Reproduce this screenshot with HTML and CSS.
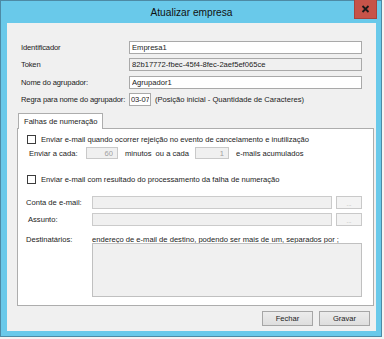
FILE: index.html
```html
<!DOCTYPE html>
<html lang="pt">
<head>
    <meta charset="UTF-8">
    <title>Atualizar empresa</title>
    <link rel="stylesheet" href="styles.css">
</head>
<body>
    <div class="window">
        <!-- Title bar -->
        <div class="titlebar">
            <span></span>
            <span class="title">Atualizar empresa</span>
            <button class="close" type="button" aria-label="Fechar">
                <svg width="9" height="8" viewBox="0 0 9 8">
                    <path d="M1.5 1 L7.5 7 M7.5 1 L1.5 7" stroke="#1a1a1a" stroke-width="1.8" fill="none"/>
                </svg>
            </button>
        </div>

        <div class="content">
            <div class="fields">
                <div class="field">
                    <label class="field-label">Identificador</label>
                    <input class="text wide" value="Empresa1">
                </div>
                <div class="field">
                    <label class="field-label">Token</label>
                    <input class="text wide readonly" value="82b17772-fbec-45f4-8fec-2aef5ef065ce" readonly>
                </div>
                <div class="field field-spaced">
                    <label class="field-label">Nome do agrupador:</label>
                    <input class="text wide" value="Agrupador1">
                </div>
                <div class="field">
                    <label class="field-label">Regra para nome do agrupador:</label>
                    <input class="text short" value="03-07">
                    <span class="hint">(Posição inicial - Quantidade de Caracteres)</span>
                </div>
            </div>

            <!-- Tab control -->
            <div class="tabs">
                <div class="tab-strip">
                    <div class="tab active">Falhas de numeração</div>
                </div>
                <div class="tab-panel">
                    <div class="check-row first">
                        <input type="checkbox" class="check">
                        <span>Enviar e-mail quando ocorrer rejeição no evento de cancelamento e inutilização</span>
                    </div>
                    <div class="every-row">
                        <span class="every-label">Enviar a cada:</span>
                        <input class="text num minutes" value="60" disabled>
                        <span class="unit">minutos</span>
                        <span class="unit">ou a cada</span>
                        <input class="text num count" value="1" disabled>
                        <span class="unit-last">e-mails acumulados</span>
                    </div>
                    <div class="check-row second">
                        <input type="checkbox" class="check">
                        <span>Enviar e-mail com resultado do processamento da falha de numeração</span>
                    </div>
                    <div class="mail-row account">
                        <span class="mail-label">Conta de e-mail:</span>
                        <input class="text mail-input" disabled>
                        <button class="dots" type="button" disabled>...</button>
                    </div>
                    <div class="mail-row subject">
                        <span class="mail-label indent">Assunto:</span>
                        <input class="text mail-input" disabled>
                        <button class="dots" type="button" disabled>...</button>
                    </div>
                    <div class="mail-row recipients">
                        <span class="mail-label">Destinatários:</span>
                        <span>endereço de e-mail de destino, podendo ser mais de um, separados por ;</span>
                    </div>
                    <textarea class="recipients-box" disabled></textarea>
                </div>
            </div>

            <div class="actions">
                <button class="button" type="button">Fechar</button>
                <button class="button" type="button">Gravar</button>
            </div>
        </div>
    </div>
</body>
</html>
```

FILE: styles.css
```css
/* Basic page */
body {
    margin: 0;
    background-color: #f4f4f4;
    font-family: "Liberation Sans", Arial, sans-serif;
    font-size: 7.6px;
    color: #1b1b1b;
    white-space: nowrap;
}

/* Window frame */
.window {
    width: 382px;
    height: 337px;
    box-sizing: border-box;
    border: 1px solid #4d8aa5;
    background-color: #69c9ea;
    padding: 0 5px 5px 6px;
    display: flex;
    flex-direction: column;
}

.titlebar {
    height: 22px;
    display: grid;
    grid-template-columns: 1fr auto 1fr;
    align-items: center;
}

.title {
    font-size: 10.2px;
    color: #111;
    padding-top: 1px;
}

.close {
    justify-self: end;
    align-self: start;
    width: 23px;
    height: 19px;
    margin: -1px -1px 0 0;
    padding: 0;
    border: 1px solid #a8443d;
    border-top: none;
    background-color: #c75349;
    display: flex;
    align-items: center;
    justify-content: center;
}

.content {
    flex: 1;
    background-color: #f0f0f0;
    display: flex;
    flex-direction: column;
}

/* Top fields */
.fields {
    padding: 18px 0 0 14px;
    display: flex;
    flex-direction: column;
    gap: 4px;
}

.field {
    height: 13px;
    display: flex;
    align-items: center;
}

.field-spaced {
    margin-top: 1px;
}

.field-label {
    width: 108px;
    flex: none;
    letter-spacing: -0.15px;
}

.text {
    box-sizing: border-box;
    height: 13px;
    margin: 0;
    padding: 0 2px;
    border: 1px solid #a9a9a9;
    background-color: #ffffff;
    font-family: inherit;
    font-size: 7.6px;
    color: #1b1b1b;
    outline: none;
}

.wide {
    width: 233px;
}

.readonly {
    background-color: #f0f0f0;
}

.short {
    width: 22px;
    padding: 0 1px;
    letter-spacing: -0.2px;
}

.hint {
    margin-left: 4px;
}

/* Tabs */
.tabs {
    margin: 7px 2px 0 10px;
}

.tab-strip {
    display: flex;
    padding-left: 1px;
}

.tab {
    height: 16px;
    box-sizing: border-box;
    padding: 0 5px;
    margin-bottom: -1px;
    border: 1px solid #adadad;
    border-bottom: none;
    background-color: #ffffff;
    display: flex;
    align-items: center;
    position: relative;
    z-index: 1;
}

.tab-panel {
    height: 178px;
    box-sizing: border-box;
    border: 1px solid #adadad;
    background-color: #ffffff;
    display: flex;
    flex-direction: column;
}

.check-row {
    height: 11px;
    display: flex;
    align-items: center;
    padding-left: 9px;
}

.check-row.first {
    margin-top: 5px;
}

.check-row.second {
    margin-top: 15px;
}

.check {
    appearance: none;
    width: 9px;
    height: 9px;
    margin: 0 5px 0 0;
    border: 1px solid #3c3c3c;
    background-color: #ffffff;
}

.every-row {
    height: 12px;
    margin-top: 2px;
    padding-left: 11px;
    display: flex;
    align-items: center;
}

.every-label {
    width: 57px;
}

.num {
    height: 12px;
    text-align: right;
    padding-right: 4px;
    background-color: #f0f0f0;
    border-color: #c9c9c9;
    color: #a0a0a0;
}

.minutes {
    width: 32px;
    margin-right: 7px;
}

.count {
    width: 34px;
    margin: 0 7px 0 6px;
}

.unit + .unit {
    margin-left: 4px;
}

.mail-row {
    display: flex;
    align-items: center;
    padding-left: 8px;
}

.mail-row.account {
    height: 13px;
    margin-top: 11px;
}

.mail-row.subject {
    height: 13px;
    margin-top: 4px;
}

.mail-row.recipients {
    height: 8px;
    margin-top: 9px;
}

.mail-label {
    width: 66px;
    flex: none;
}

.mail-label.indent {
    width: 64px;
    padding-left: 2px;
}

.mail-input {
    width: 240px;
    background-color: #f0f0f0;
    border-color: #cbcbcb;
}

.dots {
    width: 26px;
    height: 13px;
    margin-left: 4px;
    padding: 3px 0 0;
    box-sizing: border-box;
    border: 1px solid #c9c9c9;
    background-color: #f3f3f3;
    color: #a8a8a8;
    font-family: inherit;
    font-size: 6px;
}

.recipients-box {
    width: 270px;
    height: 54px;
    box-sizing: border-box;
    margin: 0 0 0 74px;
    border: 1px solid #c0c0c0;
    background-color: #f0f0f0;
    resize: none;
}

/* Bottom buttons */
.actions {
    display: flex;
    justify-content: flex-end;
    gap: 6px;
    padding: 5px 6px 0 0;
}

.button {
    width: 51px;
    height: 15px;
    box-sizing: border-box;
    padding: 0;
    border: 1px solid #a6a6a6;
    background: linear-gradient(#ececec, #dedede);
    font-family: inherit;
    font-size: 7.6px;
    color: #1b1b1b;
}
```
